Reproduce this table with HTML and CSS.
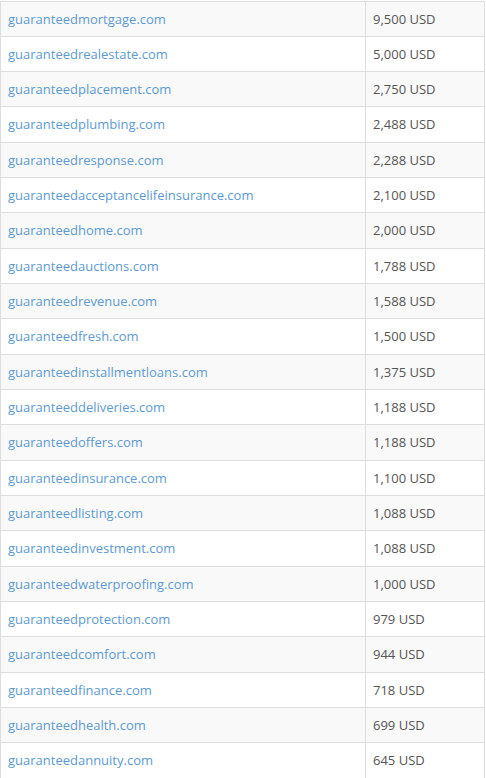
FILE: index.html
```html
<!DOCTYPE html>
<html lang="en">
<head>
    <meta charset="UTF-8">
    <meta name="viewport" content="width=device-width, initial-scale=1.0">
    <title>Domain Sales</title>
    <link rel="stylesheet" href="styles.css">
</head>
<body>
    <table class="sales-table">
        <tbody>
            <tr><td><a href="#">guaranteedmortgage.com</a></td><td>9,500 USD</td></tr>
            <tr><td><a href="#">guaranteedrealestate.com</a></td><td>5,000 USD</td></tr>
            <tr><td><a href="#">guaranteedplacement.com</a></td><td>2,750 USD</td></tr>
            <tr><td><a href="#">guaranteedplumbing.com</a></td><td>2,488 USD</td></tr>
            <tr><td><a href="#">guaranteedresponse.com</a></td><td>2,288 USD</td></tr>
            <tr><td><a href="#">guaranteedacceptancelifeinsurance.com</a></td><td>2,100 USD</td></tr>
            <tr><td><a href="#">guaranteedhome.com</a></td><td>2,000 USD</td></tr>
            <tr><td><a href="#">guaranteedauctions.com</a></td><td>1,788 USD</td></tr>
            <tr><td><a href="#">guaranteedrevenue.com</a></td><td>1,588 USD</td></tr>
            <tr><td><a href="#">guaranteedfresh.com</a></td><td>1,500 USD</td></tr>
            <tr><td><a href="#">guaranteedinstallmentloans.com</a></td><td>1,375 USD</td></tr>
            <tr><td><a href="#">guaranteeddeliveries.com</a></td><td>1,188 USD</td></tr>
            <tr><td><a href="#">guaranteedoffers.com</a></td><td>1,188 USD</td></tr>
            <tr><td><a href="#">guaranteedinsurance.com</a></td><td>1,100 USD</td></tr>
            <tr><td><a href="#">guaranteedlisting.com</a></td><td>1,088 USD</td></tr>
            <tr><td><a href="#">guaranteedinvestment.com</a></td><td>1,088 USD</td></tr>
            <tr><td><a href="#">guaranteedwaterproofing.com</a></td><td>1,000 USD</td></tr>
            <tr><td><a href="#">guaranteedprotection.com</a></td><td>979 USD</td></tr>
            <tr><td><a href="#">guaranteedcomfort.com</a></td><td>944 USD</td></tr>
            <tr><td><a href="#">guaranteedfinance.com</a></td><td>718 USD</td></tr>
            <tr><td><a href="#">guaranteedhealth.com</a></td><td>699 USD</td></tr>
            <tr><td><a href="#">guaranteedannuity.com</a></td><td>645 USD</td></tr>
        </tbody>
    </table>
</body>
</html>
```

FILE: styles.css
```css
/* Page */
body {
    margin: 0;
    padding-top: 0.5px;
    font-family: "Open Sans", Arial, sans-serif;
    font-size: 13px;
    color: #555;
    background-color: #fff;
}

/* Sales table */
.sales-table {
    width: 485px;
    border-collapse: collapse;
    border-left: 1px solid #ddd;
    border-right: 1px solid #ddd;
}

.sales-table td {
    padding: 8px 7px;
    line-height: 18.33px;
    border-top: 1px solid #ddd;
    vertical-align: top;
    white-space: nowrap;
}

.sales-table td:first-child {
    width: 350px;
    border-right: 1px solid #ddd;
}

.sales-table tr:nth-child(odd) td {
    background-color: #f9f9f9;
}

/* Links */
.sales-table a {
    color: #5d9ad3;
    text-decoration: none;
}

.sales-table a:hover {
    text-decoration: underline;
}
```
